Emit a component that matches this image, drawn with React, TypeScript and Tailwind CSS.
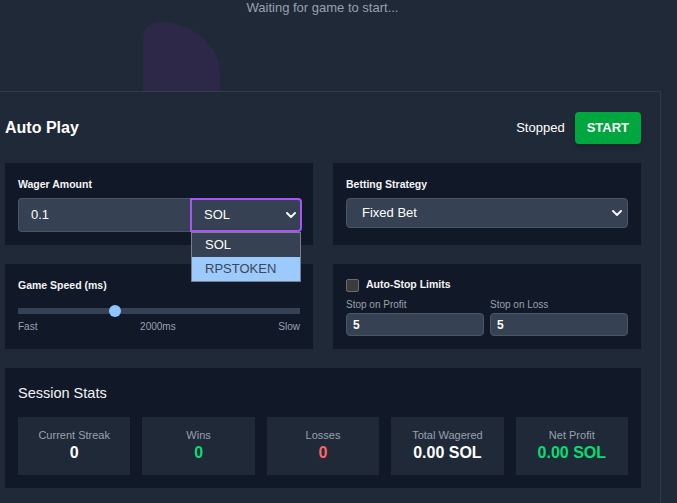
import React from 'react';

function Chevron() {
  return (
    <svg width="10" height="6" viewBox="0 0 10 6" fill="none">
      <polyline
        points="1,1 5,5 9,1"
        stroke="#f3f4f6"
        strokeWidth="2"
        strokeLinecap="round"
        strokeLinejoin="round"
      />
    </svg>
  );
}

const stats = [
  { label: 'Current Streak', value: '0', color: 'text-white' },
  { label: 'Wins', value: '0', color: 'text-green-400' },
  { label: 'Losses', value: '0', color: 'text-red-400' },
  { label: 'Total Wagered', value: '0.00 SOL', color: 'text-white' },
  { label: 'Net Profit', value: '0.00 SOL', color: 'text-green-400' },
];

export default function App() {
  return (
    <div className="min-h-screen overflow-hidden bg-[#1f2937] font-['Liberation_Sans',Arial,sans-serif] text-white">
      <div className="ml-[-16px] w-[677px]">
        {/* game area */}
        <div className="flex h-[91px] flex-col overflow-hidden">
          <div className="text-center text-[13px] leading-4 text-gray-400">
            Waiting for game to start...
          </div>
          <div className="ml-[159px] mt-[6px] h-[100px] w-[77px] shrink-0 rounded-tl-[16px] rounded-tr-[60px_52px] bg-[#2d2748]" />
        </div>

        {/* auto play panel */}
        <div className="border border-[#313a49] pb-5 pl-5 pr-[19px] pt-5">
          <div className="mb-[19px] flex h-8 items-center justify-between">
            <h2 className="text-base font-bold">Auto Play</h2>
            <div className="flex items-center gap-2.5">
              <span className="text-[13px]">Stopped</span>
              <button className="h-8 rounded bg-green-600 px-3 text-[13px] font-bold text-white shadow-md">
                START
              </button>
            </div>
          </div>

          <div className="grid grid-cols-2 gap-x-5 gap-y-[19px]">
            {/* wager */}
            <div className="bg-[#111827] p-[13px]">
              <div className="mb-1.5 text-[10.5px] font-bold leading-4 text-gray-100">
                Wager Amount
              </div>
              <div className="flex h-[34px]">
                <div className="flex flex-1 items-center rounded-l border border-r-0 border-gray-600 bg-gray-700 px-3 text-[13px]">
                  0.1
                </div>
                <div className="relative mr-[-2px] w-[112px]">
                  <div className="flex h-full items-center justify-between rounded-r-[4px] border-2 border-[#a855f7] bg-gray-700 pl-3 pr-[4px] text-[13px]">
                    <span>SOL</span>
                    <Chevron />
                  </div>
                  <div className="absolute left-px right-px top-full z-10 border border-[#7a7f88] bg-gray-700 text-[13px]">
                    <div className="flex h-6 items-center pl-[13px] text-white">SOL</div>
                    <div className="flex h-6 items-center bg-[#9ccafc] pl-[13px] text-[#3b4656]">
                      RPSTOKEN
                    </div>
                  </div>
                </div>
              </div>
            </div>

            {/* strategy */}
            <div className="bg-[#111827] p-[13px]">
              <div className="mb-1.5 text-[10.5px] font-bold leading-4 text-gray-100">
                Betting Strategy
              </div>
              <div className="flex h-[30px] items-center justify-between rounded border border-gray-600 bg-gray-700 pl-[15px] pr-[5px] text-[13px]">
                <span>Fixed Bet</span>
                <Chevron />
              </div>
            </div>

            {/* speed */}
            <div className="bg-[#111827] p-[13px]">
              <div className="text-[10.5px] font-bold leading-4 text-gray-100">Game Speed (ms)</div>
              <div className="relative mt-[15px] h-1.5 bg-gray-700">
                <span className="absolute left-[91px] top-[-3px] h-3 w-3 rounded-full bg-blue-300" />
              </div>
              <div className="mt-1.5 flex justify-between text-[10px] leading-[14px] text-gray-400">
                <span>Fast</span>
                <span>2000ms</span>
                <span>Slow</span>
              </div>
            </div>

            {/* auto stop */}
            <div className="bg-[#111827] p-[13px]">
              <div className="flex h-4 items-center gap-[7px]">
                <span className="h-[13px] w-[13px] rounded-[2px] border border-[#6b6b6b] bg-[#3b3b3b]" />
                <span className="text-[10.5px] font-bold text-gray-100">Auto-Stop Limits</span>
              </div>
              <div className="mt-[5px] grid grid-cols-2 gap-1.5">
                <div>
                  <div className="mb-px text-[10px] leading-[14px] text-gray-400">Stop on Profit</div>
                  <div className="flex h-[23px] items-center rounded border border-gray-600 bg-gray-700 px-1.5 text-xs font-bold">
                    5
                  </div>
                </div>
                <div>
                  <div className="mb-px text-[10px] leading-[14px] text-gray-400">Stop on Loss</div>
                  <div className="flex h-[23px] items-center rounded border border-gray-600 bg-gray-700 px-1.5 text-xs font-bold">
                    5
                  </div>
                </div>
              </div>
            </div>

            {/* session stats */}
            <div className="col-span-2 bg-[#111827] p-[13px]">
              <h3 className="mb-3 text-[14.5px] leading-6 text-gray-100">Session Stats</h3>
              <div className="grid grid-cols-5 gap-3">
                {stats.map((s) => (
                  <div key={s.label} className="bg-[#1f2937] pb-3 pt-2.5 text-center">
                    <div className="text-[11px] leading-4 text-gray-400">{s.label}</div>
                    <div className={`text-base font-bold leading-5 ${s.color}`}>{s.value}</div>
                  </div>
                ))}
              </div>
            </div>
          </div>
        </div>
      </div>
    </div>
  );
}
